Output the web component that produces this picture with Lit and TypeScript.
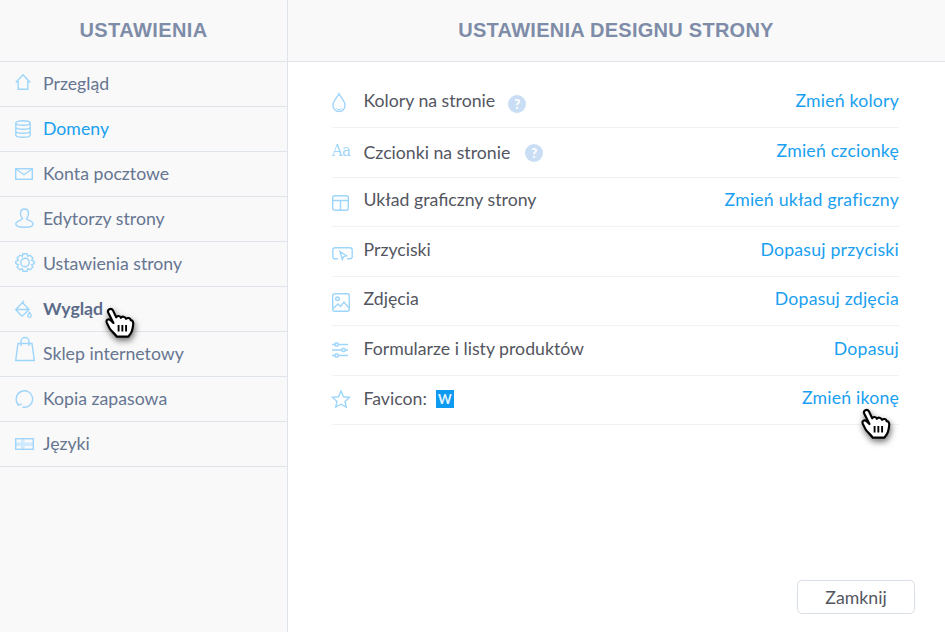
import { LitElement, html, css, svg } from "lit";
import { customElement } from "lit/decorators.js";

const icons: Record<string, unknown> = {
  home: svg`<path d="M.8 8.500 8 .8l7.200 7.700M3.200 7v8.200h9.600V7"/>`,
  db: svg`<ellipse cx="8" cy="3" rx="7.200" ry="2.300"/><path d="M.8 3v12c0 1.400 3.200 2.300 7.200 2.300s7.200-.9 7.200-2.300V3M.8 7c0 1.400 3.200 2.300 7.200 2.300S15.200 8.400 15.200 7M.8 11c0 1.400 3.200 2.300 7.200 2.300s7.200-.9 7.200-2.300"/>`,
  mail: svg`<rect x=".7" y=".7" width="16.600" height="10.600"/><path d="m.7.700 8.300 6 8.300-6"/>`,
  user: svg`<path d="M9.500 1C7 1 5.500 2.800 5.500 5.500c0 2.500 1.300 4 2 5 .3 1.800-6.700 2.300-6.700 5.500 0 2 4 3.200 8.700 3.200s8.700-1.200 8.700-3.200c0-3.200-7-3.700-6.700-5.500.7-1 2-2.500 2-5C13.500 2.800 12 1 9.500 1z"/>`,
  gear: svg`<circle cx="10" cy="9.500" r="4.200"/><path d="m8 .8h4l.7 2.400 2.500-1 2.700 2.800-1.300 2.200 2.600 1.200v2.200l-2.600 1.200 1.300 2.200-2.700 2.800-2.500-1-.7 2.400H8l-.7-2.400-2.500 1-2.700-2.800 1.300-2.200L.8 10.600V8.400l2.600-1.200-1.300-2.200 2.700-2.800 2.500 1z"/>`,
  bucket: svg`<path d="M.8 9.500 7.500 2.500l6.500 7-6 6c-.6.6-1.300.6-1.900 0zM.8 9.500h13.200M7.500 2.500l1.200-1.800"/><path d="M14.500 12.500c-1 1.500-1.700 2.300-1.700 3.200a1.700 1.700 0 0 0 3.400 0c0-.9-.7-1.700-1.700-3.200z"/>`,
  bag: svg`<path d="M3 6.500h14l2.300 17H.7zM6 9V4.500a4 4 0 0 1 8 0V9"/>`,
  backup: svg`<path d="M3.300 14.500A8.200 8.200 0 1 1 7.500 17M1.300 11.500l1.900 3.600 3.500-1.300"/>`,
  lang: svg`<rect x="1" y="4.500" width="17" height="3.500" fill="#cfeafd" stroke="none"/><rect x="6" y="1" width="3.500" height="10.500" fill="#cfeafd" stroke="none"/><rect x=".7" y=".7" width="17.600" height="10.600"/>`,
  drop: svg`<path d="M7 .9C5.500 4 1 7.500 1 12.500a6 6 0 0 0 12 0C13 7.500 8.500 4 7 .9z"/><path d="M4.500 15.500a3.500 3.500 0 0 0 5 0" stroke-width="1"/>`,
  layout: svg`<rect x=".7" y=".7" width="15.600" height="14.600" rx="2"/><path d="M.7 5.500h15.600M8.500 5.500v9.800"/>`,
  btn: svg`<path d="M6 11.800H3a2.200 2.200 0 0 1-2.200-2.200V3A2.200 2.200 0 0 1 3 .8h15A2.200 2.200 0 0 1 20.200 3v6.600a2.200 2.200 0 0 1-2.200 2.200h-3"/><path d="m8 4.500 2.300 8 1.200-2.800 3-1z"/>`,
  img: svg`<rect x=".7" y=".7" width="16.600" height="17.600" rx="2"/><circle cx="5.500" cy="5.800" r="1.800"/><path d="m1 15.500 5-4.500 2.500 2.500L12 9l5 6"/>`,
  sliders: svg`<path d="M0 2.500h16M0 8h16M0 13.500h16"/><rect x="3" y="1" width="3.200" height="3" rx="1" fill="#fcfdff"/><rect x="10" y="6.500" width="3.200" height="3" rx="1" fill="#fcfdff"/><rect x="3" y="12" width="3.200" height="3" rx="1" fill="#fcfdff"/>`,
  star: svg`<path d="m9 1 2.500 5.800 6 .6-4.500 4 1.300 5.800L9 14.200l-5.300 3 1.300-5.800-4.500-4 6-.6z"/>`,
};

const sizes: Record<string, [number, number]> = {
  home: [16, 16], db: [16, 18], mail: [18, 12], user: [19, 20], gear: [20, 19],
  bucket: [17, 18], bag: [20, 24], backup: [18, 18], lang: [19, 12],
  drop: [14, 19], layout: [17, 16], btn: [21, 13], img: [18, 19], sliders: [16, 16], star: [18, 18],
};

const icon = (name: string) => {
  const [w, h] = sizes[name];
  return html`<svg class="ic" width=${w} height=${h} viewBox="0 0 ${w} ${h}">${icons[name]}</svg>`;
};

const hand = html`<svg class="hand-svg" width="30" height="32" viewBox="0 0 32 34">
  <path d="M9 17 3.500 6C2 2.500 6.500.5 8.500 3.500L12 11c1-2 4-2 5 .5 1-2 4.500-1.500 5.500 1 1.500-1.500 4.500-1 5 1.500 2 0 3 2 2.500 5-.5 5-2 9-4 11l-1 1.500H12.500C11 29 8 27 5 23l-3-6c-1.500-3.500 2-5 4-3z" fill="#fff" stroke="#000" stroke-width="2.300" stroke-linejoin="round"/>
  <path d="M14.500 19v7M18.500 19v7M22.500 19v7" stroke="#000" stroke-width="2"/>
</svg>`;

const nav: [string, string, string, number][] = [
  ["home", "Przegląd", "", -1],
  ["db", "Domeny", "active", 1],
  ["mail", "Konta pocztowe", "", 1],
  ["user", "Edytorzy strony", "", 0],
  ["gear", "Ustawienia strony", "", -1],
  ["bucket", "Wygląd", "bold", 1],
  ["bag", "Sklep internetowy", "", -4],
  ["backup", "Kopia zapasowa", "", 1],
  ["lang", "Języki", "", 1],
];

// label/link: drop of the text below the row's text line; iconAt: icon top inside the row
type Row = { i: string; t: string; l: string; label: number; link: number; iconAt: number; helpAt?: number; helpGap?: number; fav?: boolean };
const rows: Row[] = [
  { i: "drop", t: "Kolory na stronie", l: "Zmień kolory", label: 0, link: 0, iconAt: 14.500, helpAt: 5, helpGap: 13 },
  { i: "aa", t: "Czcionki na stronie", l: "Zmień czcionkę", label: 3, link: 1, iconAt: 13, helpAt: 0, helpGap: 15 },
  { i: "layout", t: "Układ graficzny strony", l: "Zmień układ graficzny", label: 0, link: 0, iconAt: 17.500 },
  { i: "btn", t: "Przyciski", l: "Dopasuj przyciski", label: 1, link: 1, iconAt: 20 },
  { i: "img", t: "Zdjęcia", l: "Dopasuj zdjęcia", label: 0, link: 0, iconAt: 16.500 },
  { i: "sliders", t: "Formularze i listy produktów", l: "Dopasuj", label: 1, link: 1, iconAt: 16 },
  { i: "star", t: "Favicon:", l: "Zmień ikonę", label: 1, link: 0, iconAt: 14.500, fav: true },
];

@customElement("app-root")
export class AppRoot extends LitElement {
  static styles = css`
    :host { display: block; width: 945px; height: 632px; overflow: hidden; position: relative; background: #fff;
      font-family: Lato, "Open Sans", sans-serif; font-size: 17.700px; color: #54565f; }
    .shell { display: grid; grid-template-columns: 288px 1fr; grid-template-rows: 62px 1fr; height: 632px; }
    .head { display: flex; align-items: center; justify-content: center; background: #f9f9f9; border-bottom: 1px solid #dfe3ea;
      font-family: "Liberation Sans", sans-serif; font-weight: 700; font-size: 20px; color: #7e8ca8; box-sizing: border-box; }
    .head.l { border-right: 1px solid #dfe3ea; letter-spacing: .4px; }
    .head.r { letter-spacing: .26px; padding-right: 1px; }
    .side { background: #f9f9f9; border-right: 1px solid #dfe3ea; }
    .item { height: 45px; box-sizing: border-box; border-bottom: 1px solid #dfe3ea; display: flex; align-items: center; color: #667591; padding-bottom: 2px; }
    .item.active { color: #1aa0f0; }
    .item.bold { font-weight: 700; color: #5b6b89; }
    .slot { width: 43px; flex: none; display: flex; padding-left: 15px; box-sizing: border-box; }
    .ic { fill: none; stroke: #9dd5fb; stroke-width: 1.400; overflow: visible; display: block; }
    .main { padding: 16.500px 46px 0 44px; }
    .row { height: 49.500px; box-sizing: border-box; border-bottom: 1px solid #f0f2f5; display: flex; align-items: flex-start; padding-top: 11px; line-height: 22px; }
    .row .slot { width: 31.500px; padding: 0; }
    .label { flex: 1; display: flex; align-items: center; gap: 13px; }
    .label.fav-row { gap: 9px; }
    .link { color: #1aa0f0; letter-spacing: .2px; }
    .help { width: 18px; height: 18px; border-radius: 50%; background: #c9ddf5; color: #fff; font-size: 13px; font-weight: 900;
      display: flex; align-items: center; justify-content: center; }
    .fav { width: 18px; height: 18px; background: #0d9af0; color: #e6f4ff; font-size: 13px; font-weight: 700; line-height: 18px; text-align: center; }
    .aa { font-family: "DejaVu Serif", serif; color: #9dd5fb; font-size: 15px; line-height: 18px; letter-spacing: -.5px; transform: scaleY(1.1); }
    .close { position: absolute; right: 30px; bottom: 18px; width: 118px; height: 34px; box-sizing: border-box; border: 1px solid #d9dfe6; border-radius: 5px;
      background: #fff; display: flex; align-items: center; justify-content: center; color: #54565f; font: inherit; padding: 0; }
    .hand { position: absolute; filter: drop-shadow(1px 3px 3px rgba(0,0,0,.55)); }
    .hand-svg { display: block; overflow: visible; }
    .h1 { left: 105px; top: 307px; }
    .h2 { left: 861px; top: 408px; }
  `;

  render() {
    return html`<div class="shell">
      <div class="head l">USTAWIENIA</div>
      <div class="head r">USTAWIENIA DESIGNU STRONY</div>
      <div class="side">
        ${nav.map(([i, t, c, o]) => html`<div class="item ${c}"><span class="slot" style="margin-top:${o * 2}px">${icon(i)}</span>${t}</div>`)}
      </div>
      <div class="main">
        ${rows.map((r) => html`<div class="row">
          <span class="slot" style="margin-top:${r.iconAt - 11}px">${r.i === "aa" ? html`<span class="aa">Aa</span>` : icon(r.i)}</span>
          <span class="label ${r.fav ? "fav-row" : ""}" style="margin-top:${r.label}px;gap:${r.helpGap ?? 9}px"><span>${r.t}</span>
            ${r.helpAt !== undefined ? html`<span class="help" style="margin-top:${r.helpAt}px">?</span>` : ""}
            ${r.fav ? html`<span class="fav">W</span>` : ""}
          </span>
          <span class="link" style="margin-top:${r.link}px">${r.l}</span>
        </div>`)}
      </div>
    </div>
    <button class="close">Zamknij</button>
    <div class="hand h1">${hand}</div>
    <div class="hand h2">${hand}</div>`;
  }
}
